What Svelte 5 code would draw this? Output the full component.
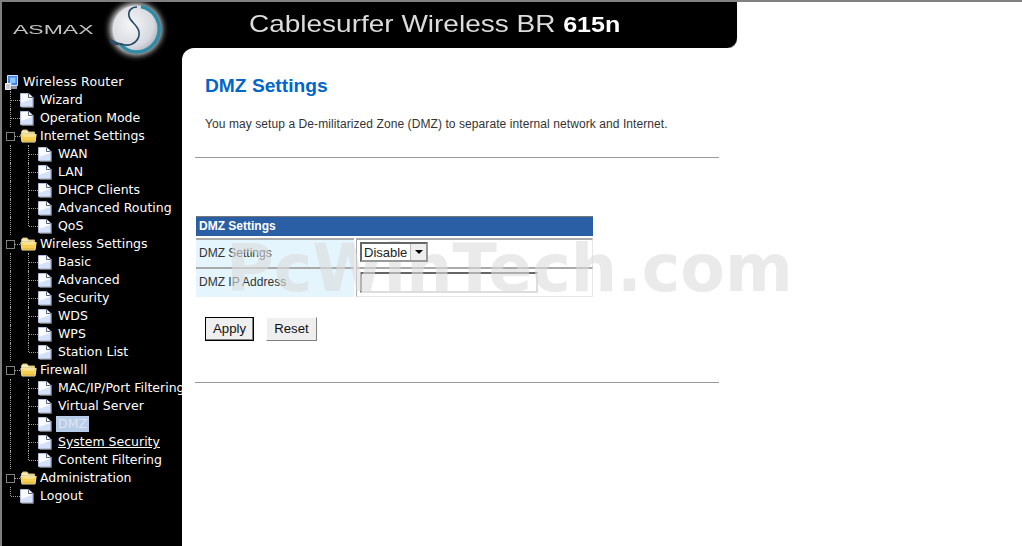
<script>
  const tree = [
    { label: 'Wizard', guides: ['t'], icon: 'page' },
    { label: 'Operation Mode', guides: ['t'], icon: 'page' },
    { label: 'Internet Settings', guides: ['box'], icon: 'folder' },
    { label: 'WAN', guides: ['v', 't'], icon: 'page' },
    { label: 'LAN', guides: ['v', 't'], icon: 'page' },
    { label: 'DHCP Clients', guides: ['v', 't'], icon: 'page' },
    { label: 'Advanced Routing', guides: ['v', 't'], icon: 'page' },
    { label: 'QoS', guides: ['v', 'l'], icon: 'page' },
    { label: 'Wireless Settings', guides: ['box'], icon: 'folder' },
    { label: 'Basic', guides: ['v', 't'], icon: 'page' },
    { label: 'Advanced', guides: ['v', 't'], icon: 'page' },
    { label: 'Security', guides: ['v', 't'], icon: 'page' },
    { label: 'WDS', guides: ['v', 't'], icon: 'page' },
    { label: 'WPS', guides: ['v', 't'], icon: 'page' },
    { label: 'Station List', guides: ['v', 'l'], icon: 'page' },
    { label: 'Firewall', guides: ['box'], icon: 'folder' },
    { label: 'MAC/IP/Port Filtering', guides: ['v', 't'], icon: 'page' },
    { label: 'Virtual Server', guides: ['v', 't'], icon: 'page' },
    { label: 'DMZ', guides: ['v', 't'], icon: 'page', selected: true },
    { label: 'System Security', guides: ['v', 't'], icon: 'page', hover: true },
    { label: 'Content Filtering', guides: ['v', 'l'], icon: 'page' },
    { label: 'Administration', guides: ['box'], icon: 'folder' },
    { label: 'Logout', guides: ['l'], icon: 'page' }
  ];
</script>

{#snippet page()}
  <svg class="ico" width="14" height="16" viewBox="0 0 14 16">
    <path d="M0.5 1.5H8.5L12.5 5V14.5H0.5Z" fill="#d5e1f8" stroke="#b4c0dc"/>
    <path d="M1 2H8V6H12V7L1 11Z" fill="#fafcff"/>
    <path d="M8.5 1.5V5.5H12.5" fill="#fff" stroke="#5a6480"/>
    <path d="M13.5 5V15.5H1.5" fill="none" stroke="#6f6f6f"/>
  </svg>
{/snippet}

{#snippet folder()}
  <svg class="ico" width="17" height="14" viewBox="0 0 17 14">
    <path d="M1.5 4V2.5L3 1H7L8.5 3H14.5V5H1.5Z" fill="#f8ecb8" stroke="#cdb86a"/>
    <path d="M0.8 5.5H16.2L15 13H2Z" fill="#f6cf52" stroke="#efe4b0"/>
    <path d="M3 7H14.5" stroke="#fff2b8"/>
    <path d="M2.5 12H14.5" stroke="#d9a92e"/>
  </svg>
{/snippet}

<div class="page">
  <header class="banner">
    <div class="brand">
      <span class="asmax">ASMAX</span>
      <svg class="swirl" width="70" height="64" viewBox="0 0 70 64">
        <defs>
          <radialGradient id="orb" cx="0.38" cy="0.4" r="0.75">
            <stop offset="0" stop-color="#f6f6f8"/>
            <stop offset="0.65" stop-color="#d6d9df"/>
            <stop offset="1" stop-color="#8f9aa6"/>
          </radialGradient>
          <filter id="glow" x="-30%" y="-30%" width="160%" height="160%">
            <feGaussianBlur stdDeviation="3"/>
          </filter>
        </defs>
        <circle cx="36" cy="27" r="26" fill="#f0f0f0" filter="url(#glow)"/>
        <circle cx="36" cy="27" r="23.5" fill="url(#orb)"/>
        <path d="M41 4.5A23 23 0 0 1 36 50C29 50 25 47 20 42" fill="none" stroke="#2f8ba6" stroke-width="3.5"/>
        <path d="M37 5C31 5 28 9 29 14C30 20 38 23 39 30C40 38 33 44 25 43C19 42 14 40 11 38C9 40 13 43 19 42" fill="none" stroke="#264a66" stroke-width="1.6"/>
      </svg>
    </div>
    <div class="product">Cablesurfer Wireless BR <b>615n</b></div>
  </header>

  <div class="body">
    <nav class="tree">
      <div class="row root">
        <svg class="ico" width="13" height="15" viewBox="0 0 13 15">
          <path d="M2.5 0.5H12.5V10.5H2.5Z" fill="#3f86e6" stroke="#d6e2f4"/>
          <path d="M5 2.5H10.5V8H5Z" fill="#8cc4f8"/>
          <path d="M0.5 8.5H6V14.5H0.5Z" fill="#c8ccd4" stroke="#f2f4f8"/>
          <path d="M7 11H12V14H7Z" fill="#8f96a4"/>
        </svg>
        <span class="label">Wireless Router</span>
      </div>
      {#each tree as item}
        <div class="row">
          {#each item.guides as g}
            <span class="guide {g}"></span>
          {/each}
          <span class="icon-cell">
            {#if item.icon === 'page'}{@render page()}{:else}{@render folder()}{/if}
          </span>
          <span class="label" class:selected={item.selected} class:hover={item.hover}>{item.label}</span>
        </div>
      {/each}
    </nav>

    <main class="content">
      <h1>DMZ Settings</h1>
      <p>You may setup a De-militarized Zone (DMZ) to separate internal network and Internet.</p>
      <hr class="rule-top" />

      <div class="form">
        <div class="title">DMZ Settings</div>
        <div class="field">
          <div class="name">DMZ Settings</div>
          <div class="val">
            <span class="select">Disable<span class="arrow"><i></i></span></span>
          </div>
        </div>
        <div class="field second">
          <div class="name">DMZ IP Address</div>
          <div class="val"><span class="input"></span></div>
        </div>
      </div>

      <div class="buttons">
        <button class="default">Apply</button>
        <button>Reset</button>
      </div>
      <hr class="rule-bottom" />
    </main>
  </div>
  <div class="watermark">PcWinTech.com</div>
</div>

<style>
  :global(body) { margin: 0; background: #fff; }
  .page {
    position: relative;
    width: 1022px;
    height: 546px;
    overflow: hidden;
    box-sizing: border-box;
    border-top: 2px solid #808080;
    font-family: "Liberation Sans", Arial, sans-serif;
    background: #fff;
  }
  .banner {
    box-sizing: border-box;
    width: 737px;
    height: 46px;
    background: #000;
    border-left: 2px solid #808080;
    border-bottom-right-radius: 10px;
    box-shadow: 0 1px 1px #999;
    display: flex;
    color: #dcdcdc;
  }
  .brand {
    width: 247px;
    flex: none;
    position: relative;
  }
  .asmax {
    position: absolute;
    left: 11px;
    top: 21px;
    font-size: 12.5px;
    line-height: 14px;
    color: #c4c4c4;
    transform: scaleX(1.84);
    transform-origin: left;
  }
  .swirl { position: absolute; left: 98px; top: 0; z-index: 2; }
  .product {
    font-size: 24px;
    line-height: 24px;
    padding-top: 10px;
    white-space: nowrap;
    transform: scaleX(1.166);
    transform-origin: left;
  }
  .product b { color: #fff; font-size: 21.5px; }
  .body {
    display: flex;
    height: 498px;
    background: linear-gradient(#000, #000) no-repeat 182px 0 / 20px 20px;
  }
  .tree {
    box-sizing: border-box;
    width: 182px;
    flex: none;
    background: #000;
    border-left: 2px solid #808080;
    padding-top: 25px;
    overflow: hidden;
    font-family: "DejaVu Sans", Verdana, sans-serif;
    font-size: 12.5px;
    color: #fff;
  }
  .row {
    display: flex;
    align-items: center;
    height: 18px;
    white-space: nowrap;
  }
  .root { padding-left: 3px; }
  .root .label { margin-left: 3px; letter-spacing: 0.2px; }
  .ico { display: block; flex: none; }
  .guide {
    position: relative;
    width: 18px;
    height: 18px;
    flex: none;
  }
  .guide::before, .guide::after { content: ""; position: absolute; }
  .guide.v::before, .guide.t::before {
    left: 8px; top: 0; height: 18px;
    border-left: 1px dotted #a0a0a0;
  }
  .guide.l::before {
    left: 8px; top: 0; height: 9px;
    border-left: 1px dotted #a0a0a0;
  }
  .guide.t::after, .guide.l::after {
    left: 9px; top: 9px; width: 9px;
    border-top: 1px dotted #a0a0a0;
  }
  .guide.box::before {
    left: 4px; top: 5px; width: 7px; height: 7px;
    border: 1px solid #808080;
  }
  .guide.box::after {
    left: 13px; top: 9px; width: 5px;
    border-top: 1px dotted #a0a0a0;
  }
  .icon-cell {
    width: 18px;
    flex: none;
    display: flex;
    align-items: center;
  }
  .label { margin-left: 0; padding: 0 2px; line-height: 16px; }
  .label.selected { background: #b7cdea; color: #dfe6f0; }
  .label.hover { text-decoration: underline; }

  .content {
    flex: none;
    width: 555px;
    box-sizing: border-box;
    background: #fff;
    border-top-left-radius: 12px;
    padding: 26px 18px 0 13px;
    color: #222;
  }
  h1 {
    margin: 0 0 0 10px;
    font-size: 19.2px;
    line-height: 24px;
    font-weight: 700;
    color: #0066cc;
  }
  p {
    margin: 19px 0 0 10px;
    font-size: 12px;
    line-height: 14px;
    letter-spacing: 0.082px;
    color: #333;
    white-space: nowrap;
  }
  hr { border: 0; border-top: 1px solid #999; margin: 0; }
  .rule-top { margin-top: 26px; }
  .form {
    margin: 58px 0 0 1px;
    width: 397px;
    font-size: 12px;
    color: #333;
  }
  .title {
    box-sizing: border-box;
    height: 20px;
    background: #2a5fa5;
    border-top: 1px solid #777;
    color: #fff;
    font-weight: 700;
    line-height: 19px;
    padding-left: 3px;
  }
  .field { display: flex; height: 29px; margin-top: 2px; }
  .field.second { height: 30px; margin-top: 0; }
  .name {
    width: 158px;
    flex: none;
    box-sizing: border-box;
    background: #e4f5fd;
    padding-left: 3px;
    line-height: 27px;
    border-top: 2px solid #aaa;
    margin-right: 2px;
  }
  .val {
    flex: 1;
    box-sizing: border-box;
    padding: 2px 0 0 3px;
    border-top: 2px solid #aaa;
    border-left: 1px solid #aaa;
    border-right: 1px solid #e6e6e6;
  }
  .second .val { border-bottom: 1px solid #e6e6e6; padding-top: 3px; }
  .select {
    position: relative;
    z-index: 2;
    display: inline-flex;
    align-items: center;
    justify-content: space-between;
    box-sizing: border-box;
    width: 68px;
    height: 20px;
    background: #fff;
    border: 2px solid;
    border-color: #666 #999 #999 #666;
    padding-left: 2px;
    font-size: 13px;
    color: #222;
  }
  .arrow {
    display: flex;
    align-items: center;
    justify-content: center;
    width: 15px;
    height: 16px;
    background: #eee;
    border-left: 1px solid #bbb;
  }
  .arrow i {
    width: 0;
    height: 0;
    border: 4px solid transparent;
    border-top: 4px solid #000;
    border-bottom: 0;
  }
  .input {
    display: block;
    box-sizing: border-box;
    width: 178px;
    height: 21px;
    border: 2px solid;
    border-color: #666 #ddd #ddd #777;
  }
  .buttons { display: flex; gap: 12px; margin: 20px 0 0 10px; align-items: flex-start; }
  button {
    box-sizing: border-box;
    height: 24px;
    width: 51px;
    padding: 0 0 2px;
    background: #efefef;
    border: 1px solid;
    border-color: #fff #808080 #808080 #fff;
    font-family: "Liberation Sans", Arial, sans-serif;
    font-size: 13.2px;
    color: #111;
  }
  button.default {
    width: 49px;
    border: 1px solid #000;
    box-shadow: inset -1px -1px 0 #808080;
  }
  .rule-bottom { margin-top: 41px; }
  .watermark {
    position: absolute;
    left: 226px;
    top: 232px;
    font-family: "DejaVu Sans", sans-serif;
    font-weight: 700;
    font-size: 65px;
    line-height: 70px;
    color: rgba(220, 220, 220, 0.6);
    white-space: nowrap;
    pointer-events: none;
  }
</style>
